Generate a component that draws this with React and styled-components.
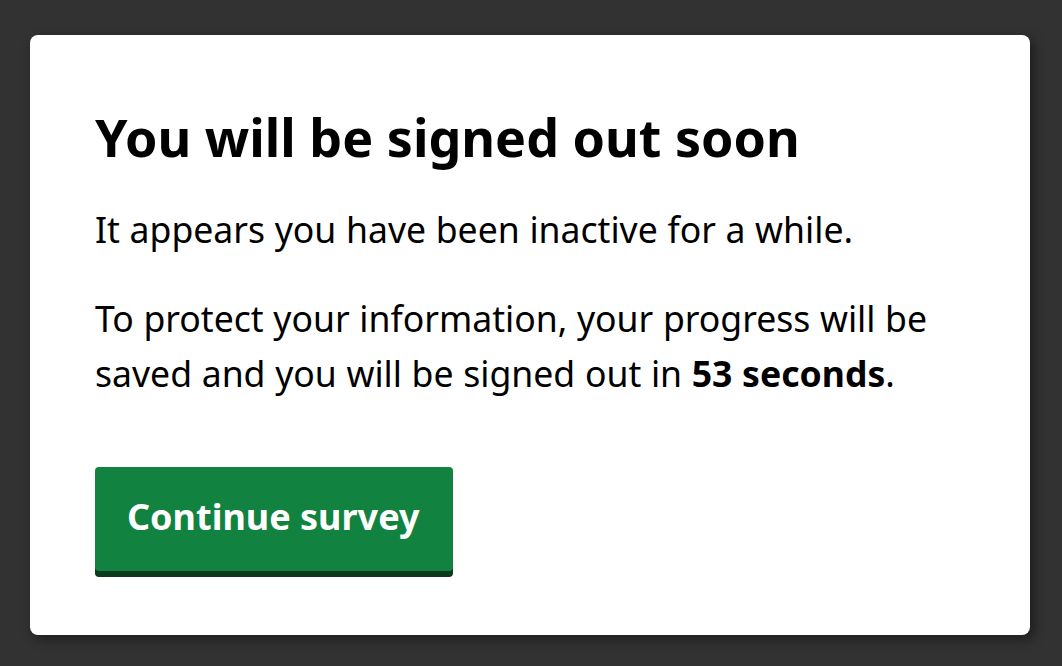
import React from "react";
import styled, { createGlobalStyle } from "styled-components";

const GlobalStyle = createGlobalStyle`
  html, body {
    margin: 0;
    padding: 0;
    background: #323232;
    font-family: "Noto Sans", "Open Sans", Arial, sans-serif;
  }
`;

const Backdrop = styled.div`
  width: 1062px;
  height: 666px;
  background: #323232;
  padding: 35px 32px 32px 30px;
  box-sizing: border-box;
`;

const Dialog = styled.div`
  width: 1000px;
  height: 600px;
  box-sizing: border-box;
  background: #ffffff;
  border-radius: 8px;
  box-shadow: 4px 4px 12px rgba(0, 0, 0, 0.45);
  padding: 73px 64px 0 65px;
  color: #000;
`;

const Title = styled.h1`
  margin: 0 0 37px;
  font-size: 52px;
  line-height: 1.1;
  font-weight: 700;
`;

const Text = styled.p`
  margin: 0 0 34px;
  font-size: 35.6px;
  line-height: 55px;
  word-spacing: 0.4px;

  strong {
    font-weight: 700;
  }
`;

const Button = styled.button`
  margin-top: 32px;
  font-family: inherit;
  font-size: 36px;
  font-weight: 700;
  line-height: 1;
  color: #ffffff;
  background: #11823f;
  border: 0;
  border-radius: 4px;
  padding: 32px 33px 36px 32px;
  box-shadow: 0 6px 0 #0b3b1e;
  cursor: pointer;
`;

export default function App() {
  return (
    <>
      <GlobalStyle />
      <Backdrop>
        <Dialog>
          <Title>You will be signed out soon</Title>
          <Text>It appears you have been inactive for a while.</Text>
          <Text>
            To protect your information, your progress will be saved and you
            will be signed out in <strong>53 seconds</strong>.
          </Text>
          <Button>Continue survey</Button>
        </Dialog>
      </Backdrop>
    </>
  );
}
